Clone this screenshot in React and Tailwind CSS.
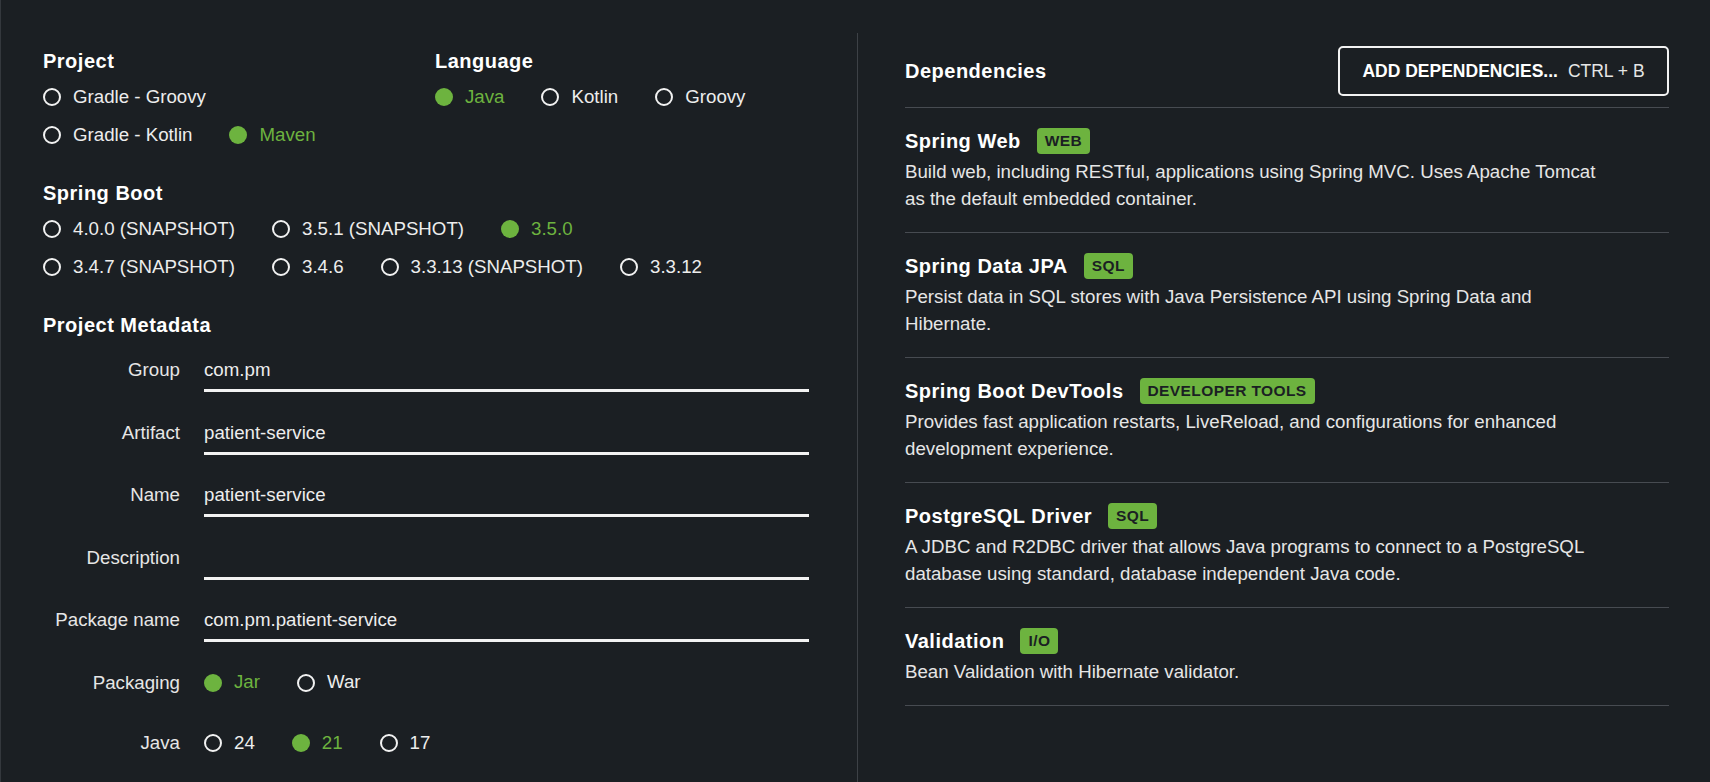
const project = [
  [{ label: "Gradle - Groovy" }],
  [{ label: "Gradle - Kotlin" }, { label: "Maven", checked: true }],
];

const languages = [{ label: "Java", checked: true }, { label: "Kotlin" }, { label: "Groovy" }];

const boot = [
  [{ label: "4.0.0 (SNAPSHOT)" }, { label: "3.5.1 (SNAPSHOT)" }, { label: "3.5.0", checked: true }],
  [{ label: "3.4.7 (SNAPSHOT)" }, { label: "3.4.6" }, { label: "3.3.13 (SNAPSHOT)" }, { label: "3.3.12" }],
];

const metadata = [
  { label: "Group", value: "com.pm" },
  { label: "Artifact", value: "patient-service" },
  { label: "Name", value: "patient-service" },
  { label: "Description", value: "" },
  { label: "Package name", value: "com.pm.patient-service" },
];

const deps = [
  {
    name: "Spring Web",
    tag: "WEB",
    desc: "Build web, including RESTful, applications using Spring MVC. Uses Apache Tomcat as the default embedded container.",
  },
  {
    name: "Spring Data JPA",
    tag: "SQL",
    desc: "Persist data in SQL stores with Java Persistence API using Spring Data and Hibernate.",
  },
  {
    name: "Spring Boot DevTools",
    tag: "DEVELOPER TOOLS",
    desc: "Provides fast application restarts, LiveReload, and configurations for enhanced development experience.",
  },
  {
    name: "PostgreSQL Driver",
    tag: "SQL",
    desc: "A JDBC and R2DBC driver that allows Java programs to connect to a PostgreSQL database using standard, database independent Java code.",
  },
  {
    name: "Validation",
    tag: "I/O",
    desc: "Bean Validation with Hibernate validator.",
  },
];

function Radio({ label, checked }) {
  return (
    <div className="flex items-center h-[38px] mr-[37px]">
      {checked ? (
        <span className="w-[18px] h-[18px] rounded-full bg-[#6db33f] shrink-0" />
      ) : (
        <span className="w-[18px] h-[18px] rounded-full border-2 border-[#f2f2f2] shrink-0" />
      )}
      <span className={checked ? "ml-[12px] text-[#6db33f]" : "ml-[12px] text-[#ededed]"}>{label}</span>
    </div>
  );
}

function Heading({ children }) {
  return <div className="h-[26px] flex items-center text-[20px] font-bold tracking-[0.5px] text-white">{children}</div>;
}

function Row({ items }) {
  return (
    <div className="flex">
      {items.map((it) => (
        <Radio key={it.label} {...it} />
      ))}
    </div>
  );
}

function Field({ label, className, children }) {
  return (
    <div className={className ? "flex items-start h-[40px] " + className : "flex items-start h-[40px]"}>
      <div className="w-[137px] h-[37px] flex items-center justify-end text-[#e6e6e6]">{label}</div>
      <div className="ml-[24px] w-[605px]">{children}</div>
    </div>
  );
}

export default function App() {
  return (
    <div className="h-[782px] overflow-hidden bg-[#1b1f23] border-l border-[#34383d] pt-[33px] text-[18.7px] font-['Liberation_Sans',Arial,sans-serif]">
      <div className="flex h-full">
        {/* left: project settings */}
        <div className="w-[856px] shrink-0 pl-[42px] pt-[15px]">
          <div className="flex">
            <div className="w-[392px]">
              <Heading>Project</Heading>
              <div className="mt-[4px]">
                {project.map((r, i) => (
                  <Row key={i} items={r} />
                ))}
              </div>
            </div>
            <div>
              <Heading>Language</Heading>
              <div className="mt-[4px]">
                <Row items={languages} />
              </div>
            </div>
          </div>

          <div className="mt-[26px]">
            <Heading>Spring Boot</Heading>
            <div className="mt-[4px]">
              {boot.map((r, i) => (
                <Row key={i} items={r} />
              ))}
            </div>
          </div>

          <div className="mt-[26px]">
            <Heading>Project Metadata</Heading>
            <div className="mt-[14px] flex flex-col gap-[22.5px]">
              {metadata.map((m) => (
                <Field key={m.label} label={m.label}>
                  <div className="h-[40px] flex items-start border-b-[3px] border-[#f2f2f2]">
                    <div className="h-[37px] flex items-center text-[#ededed]">{m.value}</div>
                  </div>
                </Field>
              ))}
              <Field label="Packaging">
                <div className="flex -mt-px">
                  <Radio label="Jar" checked />
                  <Radio label="War" />
                </div>
              </Field>
              <Field label="Java" className="-mt-[2px]">
                <div className="flex -mt-px">
                  <Radio label="24" />
                  <Radio label="21" checked />
                  <Radio label="17" />
                </div>
              </Field>
            </div>
          </div>
        </div>

        {/* right: dependencies */}
        <div className="flex-1 border-l border-[#3d4146] pl-[47px] pr-[41px] pt-[13px]">
          <div className="flex items-center justify-between pb-[11px] border-b border-[#474b51]">
            <div className="text-[20px] font-bold tracking-[0.5px] text-white">Dependencies</div>
            <button className="w-[331px] h-[50px] rounded-[5px] border-2 border-[#f2f2f2] flex items-center justify-center gap-[10px] text-[17.5px] text-white">
              <span className="font-bold">ADD DEPENDENCIES...</span>
              <span className="text-[#e6e6e6]">CTRL + B</span>
            </button>
          </div>
          {deps.map((d) => (
            <div key={d.name} className="pt-5 pb-5 border-b border-[#474b51]">
              <div className="flex items-center h-[26px]">
                <span className="text-[20px] font-bold tracking-[0.5px] text-white">{d.name}</span>
                <span className="ml-[16px] h-[26px] px-[8px] rounded-[4px] bg-[#6db33f] flex items-center text-[15.5px] font-bold tracking-[0.4px] text-[#1b1f23]">
                  {d.tag}
                </span>
              </div>
              <p className="mt-[4px] max-w-[705px] leading-[27px] text-[#e6e6e6]">{d.desc}</p>
            </div>
          ))}
        </div>
      </div>
    </div>
  );
}
